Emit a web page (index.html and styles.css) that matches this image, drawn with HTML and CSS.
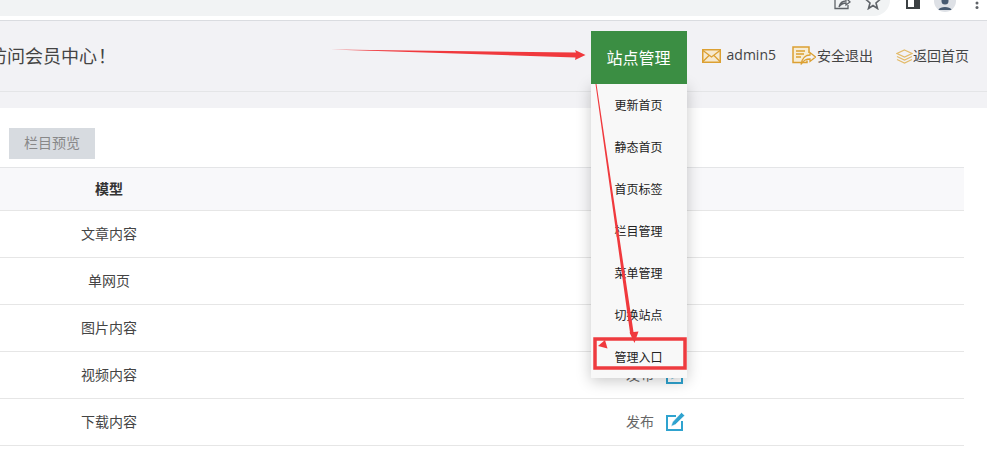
FILE: index.html
```html
<!DOCTYPE html>
<html lang="zh-CN">
<head>
<meta charset="utf-8">
<title>会员中心</title>
<link rel="stylesheet" href="styles.css">
</head>
<body>
<div class="page">
  <div class="browser">
    <div class="address"></div>
    <div class="browser-icons">
      <svg class="b-share" width="18" height="10" viewBox="0 0 18 10"><path d="M2 -4V8.500H15V5M6 7C7 3 10 1 13 1V-2L17 2L13 5V3C10 3 8 4 6 7Z" fill="none" stroke="#5f6368" stroke-width="1.300"/></svg>
      <svg class="b-star" width="16" height="10" viewBox="0 0 16 10"><path d="M8 -6L10 -1L15 -.5L11 3L12.500 8.500L8 5.500L3.500 8.500L5 3L1 -.5L6 -1Z" fill="none" stroke="#5f6368" stroke-width="1.600"/></svg>
      <svg class="b-panel" width="14" height="9" viewBox="0 0 14 9"><path d="M0 0H14V9H0Z" fill="#3c4043"/><path d="M2 0H8V7H2Z" fill="#fff"/></svg>
      <svg class="b-avatar" width="22" height="13" viewBox="0 0 22 13"><circle cx="11" cy="1" r="11" fill="#dee1e6"/><circle cx="11" cy="1" r="3.500" fill="#475a70"/><path d="M4.500 9.500C6 6 16 6 17.500 9.500L17 10H5Z" fill="#475a70"/></svg>
      <svg class="b-menu" width="4" height="10" viewBox="0 0 4 10"><circle cx="2" cy="3" r="1.500" fill="#5f6368"/><circle cx="2" cy="7.500" r="1.500" fill="#5f6368"/></svg>
    </div>
  </div>

  <header class="topbar">
    <h1 class="welcome">访问会员中心<span class="bang">！</span></h1>
    <nav class="nav">
      <div class="site-menu">
        <div class="site-title">站点管理</div>
        <ul class="dropdown">
          <li>更新首页</li>
          <li>静态首页</li>
          <li>首页标签</li>
          <li>栏目管理</li>
          <li>菜单管理</li>
          <li>切换站点</li>
          <li>管理入口</li>
        </ul>
      </div>
      <a class="nav-link nav-user">
        <svg width="19" height="14" viewBox="0 0 19 14"><rect x=".75" y=".75" width="17.500" height="12.500" fill="#f6e9cf" stroke="#dca032" stroke-width="1.500"/><path d="M1 1.500L9.500 8L18 1.500M1 12.500L7 6.500M18 12.500L12 6.500" fill="none" stroke="#dca032" stroke-width="1.300"/></svg>
        <span>admin5</span>
      </a>
      <a class="nav-link nav-exit">
        <svg width="24" height="20" viewBox="0 0 24 20"><path d="M15 14.500V16.500H1V1H17V7" fill="#f7edd6" stroke="#dca032" stroke-width="1.500"/><path d="M4 5H13M4 8H12M4 11H9" stroke="#dca032" stroke-width="1.500"/><path d="M9 18.500C10 12 14 9 18 9V6.500L23.500 11L18 15.500V13C14 13 12 14 9 18.500Z" fill="#f2f2f5" stroke="#dca032" stroke-width="1.300"/></svg>
        <span>安全退出</span>
      </a>
      <a class="nav-link nav-home">
        <svg width="17" height="15" viewBox="0 0 17 15"><path d="M8.500 1L16 4.500L8.500 8L1 4.500Z" fill="none" stroke="#e3bb6a" stroke-width="1.200"/><path d="M1 7.500L8.500 11L16 7.500M1 10.500L8.500 14L16 10.500" fill="none" stroke="#e3bb6a" stroke-width="1.200"/></svg>
        <span>返回首页</span>
      </a>
    </nav>
  </header>
  <div class="band"></div>

  <main class="content">
    <button class="preview">栏目预览</button>
    <div class="table">
      <div class="row head"><div class="model">模型</div></div>
      <div class="row"><div class="model">文章内容</div><div class="action"><span>发布</span><svg class="edit" width="19" height="19" viewBox="0 0 19 19"><use href="#edit"/></svg></div></div>
      <div class="row"><div class="model">单网页</div><div class="action"><span>发布</span><svg class="edit" width="19" height="19" viewBox="0 0 19 19"><use href="#edit"/></svg></div></div>
      <div class="row"><div class="model">图片内容</div><div class="action"><span>发布</span><svg class="edit" width="19" height="19" viewBox="0 0 19 19"><use href="#edit"/></svg></div></div>
      <div class="row"><div class="model">视频内容</div><div class="action"><span>发布</span><svg class="edit" width="19" height="19" viewBox="0 0 19 19"><use href="#edit"/></svg></div></div>
      <div class="row"><div class="model">下载内容</div><div class="action"><span>发布</span><svg class="edit" width="19" height="19" viewBox="0 0 19 19"><use href="#edit"/></svg></div></div>
    </div>
  </main>

  <svg class="defs" width="0" height="0"><defs><g id="edit"><path d="M10 4H1V18H16V9" fill="none" stroke="#2fa3cf" stroke-width="2"/><path d="M15.500 .5L18.800 3.500L9.500 12.500L5 14.500L6.500 10Z" fill="#2fa3cf" stroke="#fff" stroke-width=".6"/></g></defs></svg>

  <svg class="annotations" width="987" height="452" viewBox="0 0 987 452">
    <path d="M331 49.500L576 52.500L575 50L585.500 55L575 60L575.500 57.500Z" fill="#f0393d"/>
    <path d="M595.500 84L596.500 84L633.500 332L638.500 331.500L634.500 343L629.500 332.500L630 332.500Z" fill="#f0393d"/>
    <rect x="595" y="339" width="90" height="29" fill="none" stroke="#ee3b3f" stroke-width="3.500"/>
    <path d="M598 346L605 340L607.500 348.500Z" fill="#f0393d"/>
  </svg>
</div>
</body>
</html>
```
FILE: styles.css
```css
* { box-sizing: border-box; }
html, body { margin: 0; padding: 0; background: #fff; }
body { font-family: "Noto Sans CJK SC", "Open Sans", sans-serif; color: #333; }
.page { position: relative; width: 987px; height: 452px; overflow: hidden; }

.browser { position: relative; height: 21px; background: #fff; border-bottom: 1px solid #dadce0; }
.address { width: 890px; height: 16px; background: #f1f3f4; border-bottom-right-radius: 16px; }
.browser-icons { position: absolute; inset: 0; }
.browser-icons svg { position: absolute; top: 0; display: block; }
.b-share { left: 833px; }
.b-star { left: 865px; }
.b-panel { left: 906px; }
.b-avatar { left: 934px; }
.b-menu { left: 975px; }

.topbar { display: flex; justify-content: space-between; height: 71px; background: #f2f2f5; border-bottom: 1px solid #e4e5e7; }
.welcome { margin: 0 0 0 -11px; font-size: 18px; font-weight: 400; line-height: 69px; color: #444; white-space: nowrap; }
.bang { padding-left: 1px; font-family: "Noto Sans CJK TC", sans-serif; }
.nav { display: flex; align-items: flex-start; padding: 10px 18px 0 0; }
.site-menu { position: relative; width: 96px; margin-right: 15px; }
.site-title { position: relative; z-index: 3; height: 53px; line-height: 53px; text-align: center; font-size: 16px; color: #fff; background: #3b8e43; }
.dropdown { position: absolute; z-index: 2; top: 53px; left: 0; width: 96px; margin: 0; padding: 0; list-style: none; background: #f8f8f8; box-shadow: 0 3px 14px rgba(0, 0, 0, .22); }
.dropdown li { height: 42px; line-height: 42px; text-align: center; font-size: 12px; color: #222; }
.nav-link { display: flex; align-items: center; height: 50px; font-size: 14px; color: #444; white-space: nowrap; }
.nav-link span { padding-bottom: 3px; }
.nav-user { margin-right: 16px; gap: 6px; }
.nav-user span { font-family: "Open Sans", sans-serif; }
.nav-exit { margin-right: 23px; gap: 1px; }
.nav-home { gap: 0; }

.band { height: 16px; background: #f2f2f5; }
.content { padding: 20px 23px 0 0; background: #fff; }
.preview { display: block; width: 86px; height: 31px; margin: 0 0 8px 9px; padding: 0 0 3px; border: 0; background: #d7dbe0; color: #888; font: 14px "Noto Sans CJK SC", sans-serif; }
.table { width: 964px; border-top: 1px solid #e4e5e7; font-size: 14px; }
.row { display: flex; align-items: center; height: 47px; border-bottom: 1px solid #e6e6e6; }
.head { height: 43px; background: #f8f8fa; font-weight: 700; color: #333; }
.model { width: 218px; padding-bottom: 3px; text-align: center; color: #444; }
.head .model { color: #333; }
.action { display: flex; align-items: center; margin-left: 408px; gap: 12px; color: #666; }
.action span { padding-bottom: 3px; }
.edit { display: block; margin-top: -2px; }
.defs { position: absolute; }
.annotations { position: absolute; z-index: 4; left: 0; top: 0; pointer-events: none; }
```
